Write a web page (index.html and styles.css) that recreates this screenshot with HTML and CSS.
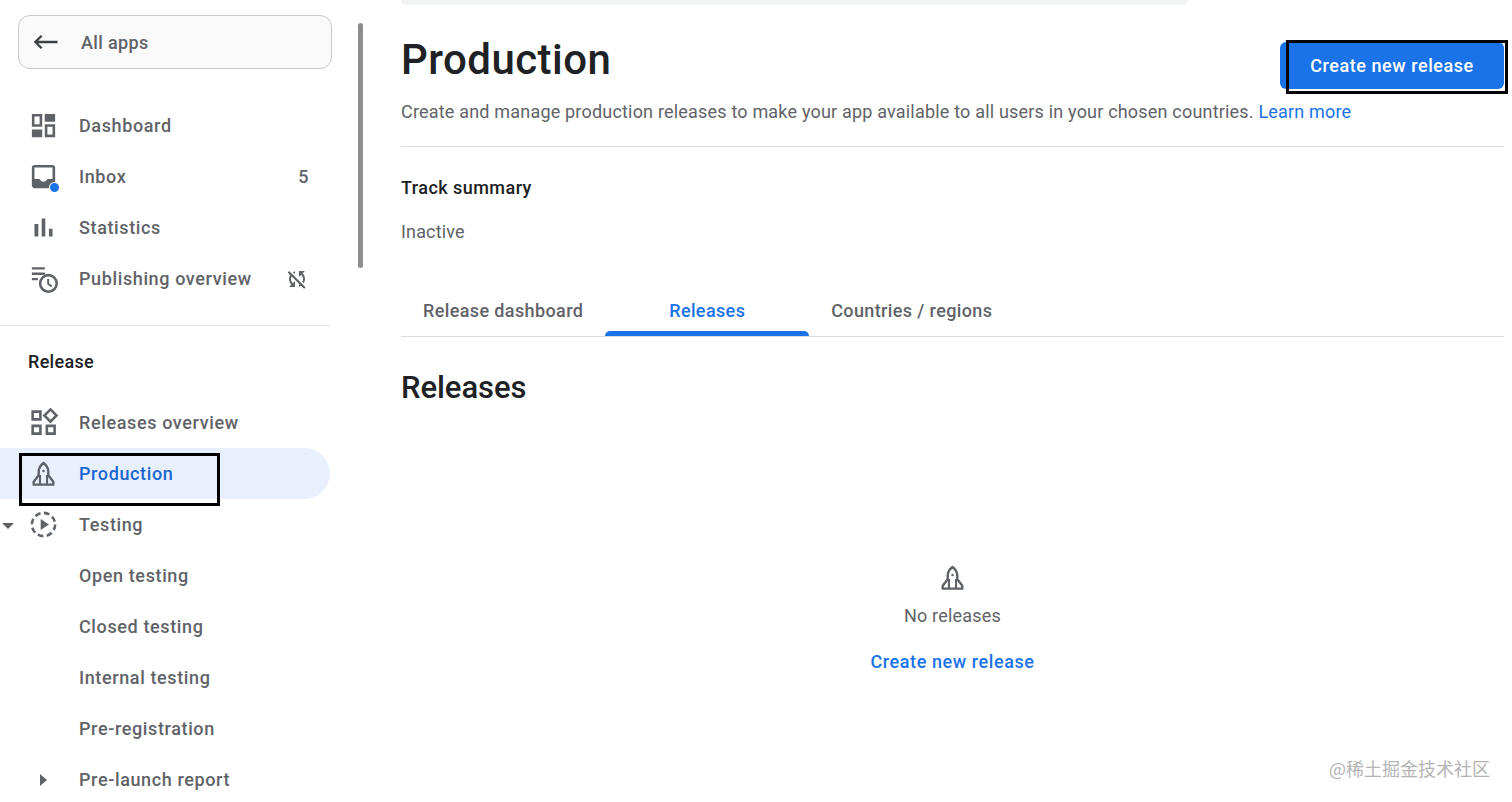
FILE: index.html
```html
<!DOCTYPE html>
<html lang="en">
<head>
<meta charset="utf-8">
<title>Production</title>
<link rel="stylesheet" href="styles.css">
</head>
<body>
<svg class="defs" width="0" height="0" aria-hidden="true">
  <symbol id="rocket" viewBox="0 0 24 24">
    <path d="M12 1.4C15 3.6 16.6 6.4 16.6 9.8V13.2L21.4 19.4V22.2H2.6V19.4L7.4 13.2V9.8C7.4 6.4 9 3.6 12 1.4Z" fill="none" stroke="currentColor" stroke-width="2.3" stroke-linejoin="round"/>
    <path d="M8.6 13V22M15.4 13V22" fill="none" stroke="currentColor" stroke-width="2"/>
    <circle cx="12" cy="9" r="1.2" fill="currentColor"/>
  </symbol>
</svg>
<div class="page">
  <aside class="sidebar">
    <div class="scrollbar"></div>
    <button class="back">
      <svg class="back-arrow" viewBox="0 0 24 14" width="24" height="14"><path d="M23.5 7H1.6M7.6 .8 1.4 7l6.2 6.2" fill="none" stroke="currentColor" stroke-width="2.3"/></svg>
      <span>All apps</span>
    </button>
    <nav class="nav nav-top">
      <a class="row">
        <svg class="ico" viewBox="0 0 24 24"><path fill-rule="evenodd" d="M3 3h8v10H3zM5 5v6h4V5zM13 3h8v6h-8zM3 15h8v6H3zM13 11h8v10h-8zM15 13v6h4v-6z"/></svg>
        <span class="label">Dashboard</span>
      </a>
      <a class="row">
        <span class="ico-wrap">
          <svg class="ico" viewBox="0 0 24 24"><path d="M19 3H5c-1.1 0-2 .9-2 2v14c0 1.1.9 2 2 2h14c1.1 0 2-.9 2-2V5c0-1.1-.9-2-2-2zm0 2v9h-3.56c-.36 0-.68.19-.86.5-.52.9-1.47 1.5-2.58 1.5s-2.06-.6-2.58-1.5c-.18-.31-.51-.5-.86-.5H5V5h14z"/></svg>
          <span class="dot"></span>
        </span>
        <span class="label">Inbox</span>
        <span class="count">5</span>
      </a>
      <a class="row">
        <svg class="ico" viewBox="0 0 24 24"><path d="M5 9.2h3V19H5zM10.6 5h2.8v14h-2.8zm5.6 8H19v6h-2.8z"/></svg>
        <span class="label">Statistics</span>
      </a>
      <a class="row">
        <svg class="ico" viewBox="0 0 24 24">
          <path d="M3 3.2h10v1.8H3zM3 7.4h10v1.8H3zM3 11.6h4.6v1.8H3z"/>
          <circle cx="15.8" cy="15.8" r="6.4" fill="#fff" stroke="currentColor" stroke-width="2"/>
          <path d="M15.6 12.4v3.7l2.7 2" fill="none" stroke="currentColor" stroke-width="1.5"/>
        </svg>
        <span class="label">Publishing overview</span>
        <svg class="sync" viewBox="0 0 24 24"><path d="M10 6.35V4.26c-.8.21-1.55.54-2.23.96l1.46 1.46c.25-.12.5-.24.77-.33zm-7.14-.94l2.36 2.36C4.45 8.99 4 10.44 4 12c0 2.21.91 4.2 2.36 5.64L4 20h6v-6l-2.24 2.24C6.68 15.15 6 13.66 6 12c0-1 .25-1.94.68-2.77l8.08 8.08c-.25.13-.5.25-.77.34v2.09c.8-.21 1.55-.54 2.23-.96l2.36 2.36 1.27-1.27L4.14 4.14 2.86 5.41zM20 4h-6v6l2.24-2.24C17.32 8.85 18 10.34 18 12c0 1-.25 1.94-.68 2.77l1.46 1.46C19.55 15.01 20 13.56 20 12c0-2.21-.91-4.2-2.36-5.64L20 4z"/><path d="M3.5 4.8 19.9 21.2" fill="none" stroke="#5f6368" stroke-width="1.8"/></svg>
      </a>
    </nav>
    <hr class="side-rule">
    <h3 class="side-title">Release</h3>
    <nav class="nav">
      <a class="row">
        <svg class="ico" viewBox="0 0 24 24">
          <path fill="none" stroke="currentColor" stroke-width="2" d="M3.6 3.6h6v6h-6zM3.6 14.6h6v6h-6zM14.6 14.6h6v6h-6zM17.4 1.9l4.7 4.7-4.7 4.7-4.7-4.7z"/>
        </svg>
        <span class="label">Releases overview</span>
      </a>
      <a class="row active">
        <span class="ico-space rocket-col"><svg class="rocket"><use href="#rocket"/></svg></span>
        <span class="label">Production</span>
        <span class="annot annot-side"></span>
      </a>
      <a class="row">
        <span class="caret-down"></span>
        <svg class="ico" viewBox="0 0 24 24">
          <circle cx="12" cy="12" r="9" fill="none" stroke="currentColor" stroke-width="2" stroke-dasharray="4.4 2.67"/>
          <path d="M9.8 7.8v8.4L16.2 12z"/>
        </svg>
        <span class="label">Testing</span>
      </a>
      <a class="row"><span class="ico-space"></span><span class="label">Open testing</span></a>
      <a class="row"><span class="ico-space"></span><span class="label">Closed testing</span></a>
      <a class="row"><span class="ico-space"></span><span class="label">Internal testing</span></a>
      <a class="row"><span class="ico-space"></span><span class="label">Pre-registration</span></a>
      <a class="row"><span class="ico-space caret-col"><span class="caret-right"></span></span><span class="label">Pre-launch report</span></a>
    </nav>
  </aside>

  <main class="main">
    <div class="topbar"></div>
    <header class="head">
      <h1 class="title">Production</h1>
      <button class="primary">Create new release<span class="annot annot-btn"></span></button>
    </header>
    <p class="desc">Create and manage production releases to make your app available to all users in your chosen countries. <a class="link">Learn more</a></p>
    <hr class="rule">
    <h2 class="summary-title">Track summary</h2>
    <p class="summary-text">Inactive</p>
    <div class="tabs">
      <a class="tab">Release dashboard</a>
      <a class="tab tab-active">Releases</a>
      <a class="tab">Countries / regions</a>
    </div>
    <h2 class="section-title">Releases</h2>
    <div class="empty">
      <svg class="rocket"><use href="#rocket"/></svg>
      <p class="empty-text">No releases</p>
      <a class="link empty-link">Create new release</a>
    </div>
  </main>
</div>
<div class="watermark">@稀土掘金技术社区</div>
</body>
</html>
```
FILE: styles.css
```css
* { box-sizing: border-box; }
html, body { margin: 0; height: 802px; overflow: hidden; background: #fff; }
body { font-family: Roboto, "Liberation Sans", sans-serif; color: #5f6368; font-size: 18px; }
.defs { position: absolute; }
.page { display: flex; height: 802px; }

/* sidebar */
.sidebar { position: relative; flex: 0 0 363px; padding-top: 15px; }
.scrollbar { position: absolute; left: 358px; top: 23px; width: 5px; height: 245px; border-radius: 3px; background: #8c8e90; }
.back {
  display: flex; align-items: center; width: 314px; height: 54px; margin-left: 18px; padding: 0 0 0 15px;
  border: 1px solid #c6c8ca; border-radius: 12px; background: #fafafa; color: #5f6368;
  font: 500 18px Roboto, sans-serif; letter-spacing: .35px;
}
.back-arrow { margin-right: 23px; color: #3c4043; }
.nav { display: flex; flex-direction: column; }
.nav-top { margin-top: 31px; }
.row {
  position: relative; display: flex; align-items: center; height: 51px; width: 330px; padding-left: 28px;
  color: #5f6368; font-weight: 500; letter-spacing: .62px; flex: none;
}
.ico { width: 31px; height: 31px; flex: none; fill: #5f6368; color: #5f6368; }
.ico-wrap { position: relative; display: flex; flex: none; }
.ico-space { width: 31px; flex: none; }
.rocket-col { display: flex; justify-content: center; }
.rocket { display: block; width: 25px; height: 26px; flex: none; color: #5f6368; }
.label { margin-left: 20px; }
.dot { position: absolute; left: 22px; top: 22px; width: 9px; height: 9px; border-radius: 50%; background: #1a73e8; box-shadow: 0 0 0 1px #fff; }
.count { margin-left: auto; margin-right: 21px; }
.sync { width: 24px; height: 24px; margin-left: auto; margin-right: 21px; fill: #5f6368; }
.side-rule { width: 330px; height: 1px; margin: 21px 0 0; border: 0; background: #e6e7e8; }
.side-title { margin: 24px 0 23px 28px; font-size: 18px; line-height: 24px; font-weight: 500; color: #202124; letter-spacing: .3px; }
.active { background: #e8f0fe; border-radius: 0 26px 26px 0; color: #1967d2; }
.annot { position: absolute; border: 3px solid #000; pointer-events: none; }
.annot-side { left: 19px; top: 5px; width: 201px; height: 53px; }
.caret-down { position: absolute; left: 2px; top: 24px; border: 6px solid transparent; border-bottom: 0; border-top-color: #5f6368; }
.caret-col { display: flex; justify-content: center; }
.caret-right { border: 6.5px solid transparent; border-right: 0; border-left: 7px solid #5f6368; }

/* main */
.main { flex: 1; min-width: 0; padding: 0 8px 0 38px; }
.topbar { width: 787px; height: 5px; background: #f1f3f4; border-radius: 0 0 6px 6px; }
.head { display: flex; justify-content: space-between; align-items: flex-start; margin-top: 31px; height: 48px; }
.title { margin: 0; font-size: 42px; line-height: 48px; font-weight: 500; color: #202124; letter-spacing: .45px; }
.primary {
  position: relative; width: 224px; height: 47px; margin-top: 6px; padding: 0; border: 0; border-radius: 6px;
  background: #1a73e8; color: #fff; font: 500 18px Roboto, sans-serif; letter-spacing: .55px;
}
.annot-btn { left: 6px; top: -2px; width: 222px; height: 54px; }
.desc { margin: 16px 0 0; line-height: 24px; color: #5f6368; letter-spacing: .19px; }
.link { color: #1a73e8; }
.rule { height: 1px; margin: 22px 0 0; border: 0; background: #dadce0; }
.summary-title { margin: 29px 0 0; font-size: 18px; line-height: 24px; font-weight: 500; color: #202124; letter-spacing: .45px; }
.summary-text { margin: 20px 0 0; line-height: 24px; color: #5f6368; letter-spacing: .15px; }
.tabs { display: flex; height: 52px; margin-top: 41px; border-bottom: 1px solid #dadce0; }
.tab { position: relative; display: flex; align-items: center; justify-content: center; min-width: 204px; height: 51px; padding: 0 22px; font-weight: 500; letter-spacing: .38px; color: #5f6368; }
.tab-active { color: #1a73e8; }
.tab-active::after { content: ""; position: absolute; left: 0; right: 0; bottom: 0; height: 5px; background: #1a73e8; border-radius: 5px 5px 0 0; }
.section-title { margin: 31px 0 0; font-size: 31px; line-height: 40px; font-weight: 500; color: #202124; letter-spacing: -.05px; }
.empty { display: flex; flex-direction: column; align-items: center; margin-top: 157px; }
.empty-text { margin: 13px 0 0; line-height: 24px; color: #5f6368; letter-spacing: .2px; }
.empty-link { margin-top: 22px; line-height: 24px; font-weight: 500; letter-spacing: .58px; }

.watermark { position: absolute; left: 1329px; top: 755px; font: 18px/26px "Noto Sans CJK SC", sans-serif; color: #b4b4b4; }
```
